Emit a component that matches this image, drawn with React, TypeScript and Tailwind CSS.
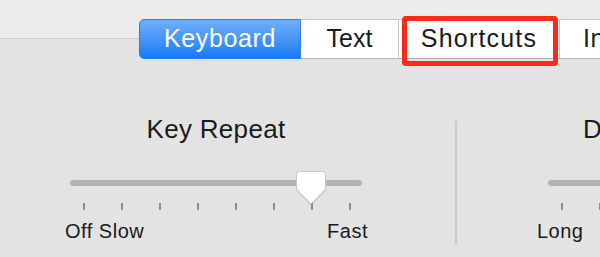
import React from 'react';

const tickOffsets = [0, 1, 2, 3, 4, 5, 6, 7];

const Thumb: React.FC = () => (
    <svg width="32" height="36" viewBox="0 0 32 36" className="absolute left-[225px] top-[-10px]">
        <defs>
            <filter id="thumbShadow" x="-20%" y="-20%" width="140%" height="140%">
                <feDropShadow dx="0" dy="0.5" stdDeviation="0.6" floodColor="#000" floodOpacity="0.25" />
            </filter>
        </defs>
        <path
            d="M4.5 1.5 H27.5 Q30.5 1.5 30.5 4.5 V19 L16 34 L1.5 19 V4.5 Q1.5 1.5 4.5 1.5 Z"
            fill="#ffffff"
            stroke="#c9c9c9"
            strokeWidth="1"
            filter="url(#thumbShadow)"
        />
    </svg>
);

const Slider: React.FC<{ width: number; ticks: number; thumb?: boolean }> = ({ width, ticks, thumb }) => (
    <div className="relative shrink-0" style={{ width }}>
        <div className="h-[6px] rounded-full bg-[#b3b3b3]" />
        {thumb && <Thumb />}
        <div className="flex gap-[36.5px] pl-[13px] mt-[17px]">
            {tickOffsets.slice(0, ticks).map(i => (
                <div key={i} className="shrink-0 w-[1.5px] h-[7px] bg-[#8e8e8e]" />
            ))}
        </div>
    </div>
);

export default function App() {
    return (
        <div className="relative w-[600px] h-[257px] overflow-hidden bg-[#e3e3e3] font-['Liberation_Sans',Arial,sans-serif] text-[#1a1a1a]">
            <div className="h-[39px] bg-[#ececec] border-b border-[#cdcdcd]" />

            {/* segmented tabs */}
            <div className="flex h-[40px] mt-[-20px] ml-[139px] w-[600px]">
                <div className="shrink-0 flex items-center justify-center w-[162px] rounded-l-[5px] border border-[#2a7ef0] bg-gradient-to-b from-[#6db0fb] to-[#1279f8] text-white text-[25px] tracking-[0.6px]">
                    Keyboard
                </div>
                <div className="shrink-0 flex items-center justify-center w-[97px] bg-white border-y border-[#c6c6c6] border-b-[#b5b5b5] text-[25px]">
                    Text
                </div>
                <div className="shrink-0 flex items-center justify-center w-[162px] bg-white border border-[#c6c6c6] border-b-[#b5b5b5] text-[25px] tracking-[1.2px]">
                    Shortcuts
                </div>
                <div className="shrink-0 flex items-center pl-[23px] w-[200px] bg-white border-y border-[#c6c6c6] border-b-[#b5b5b5] text-[25px] tracking-[0.6px] whitespace-nowrap">
                    Input Sources
                </div>
            </div>

            {/* highlight annotation */}
            <div className="absolute left-[402px] top-[16px] w-[156px] h-[50px] border-[5px] border-[#fd2b16] rounded-[4px]" />

            <div className="flex mt-[57px]">
                <div className="shrink-0 w-[455px] flex flex-col pl-[70px]">
                    <div className="w-[292px] text-center text-[26px] leading-none tracking-[0.3px]">Key Repeat</div>
                    <div className="mt-[38px]">
                        <Slider width={292} ticks={8} thumb />
                    </div>
                    <div className="flex justify-between w-[303px] ml-[-5px] mt-[11px] text-[20px] leading-none tracking-[0.5px]">
                        <span>Off Slow</span>
                        <span>Fast</span>
                    </div>
                </div>
                <div className="shrink-0 w-[2px] h-[123px] mt-[5px] bg-[#c9c9c9]" />
                <div className="shrink-0 flex flex-col pl-[91px]">
                    <div className="ml-[35px] text-[26px] leading-none whitespace-nowrap tracking-[0.3px]">Delay Until Repeat</div>
                    <div className="mt-[38px]">
                        <Slider width={292} ticks={6} />
                    </div>
                    <div className="ml-[-11px] mt-[11px] text-[20px] leading-none tracking-[0.5px]">Long</div>
                </div>
            </div>
        </div>
    );
}
